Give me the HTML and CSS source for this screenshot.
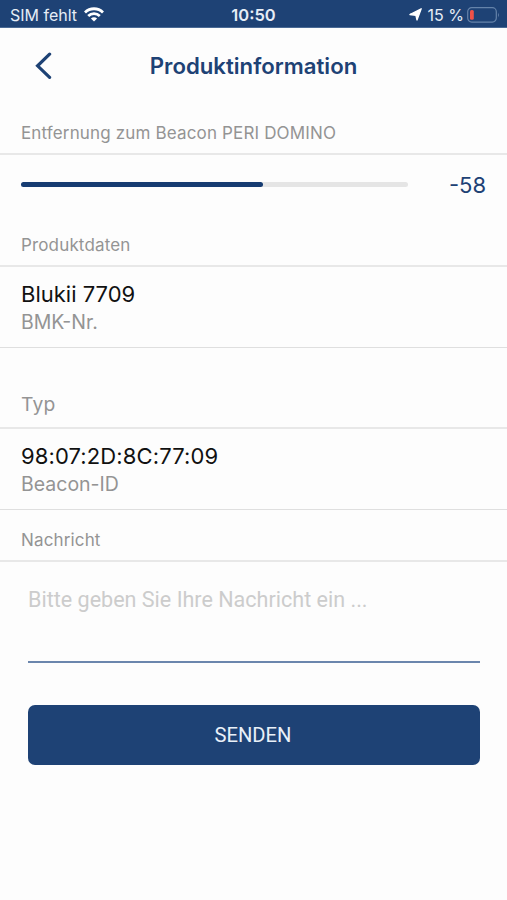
FILE: index.html
```html
<!DOCTYPE html>
<html lang="de">
<head>
<meta charset="utf-8">
<title>Produktinformation</title>
<link rel="stylesheet" href="styles.css">
</head>
<body>
<div class="status-bar">
  <div class="status-left"><span class="carrier">SIM fehlt</span>
    <svg class="wifi" width="20" height="15" viewBox="0 0 20 15" fill="none" stroke="#fff" stroke-width="2.8"><path d="M1 5.4C6 .5 14 .5 19 5.4M4.2 8.9c3.3-3.1 8.3-3.1 11.6 0"/><path d="M6.9 11.5c1.8-1.6 4.4-1.6 6.2 0L10 14.6Z" fill="#fff" stroke="none"/></svg>
  </div>
  <span class="clock">10:50</span>
  <div class="status-right">
    <svg class="location" width="13" height="13" viewBox="0 0 13 13"><path d="M12.2.8 8 12 6.9 7.3.9 6.5Z" fill="#fff" stroke="#fff" stroke-width="1.3" stroke-linejoin="round"/></svg>
    <span class="charge">15 %</span>
    <svg class="battery" width="33" height="16" viewBox="0 0 33 16"><rect x=".7" y=".7" width="28.6" height="14.4" rx="4" fill="none" stroke="#6583aa" stroke-width="1.2"/><rect x="3" y="3" width="3.8" height="9.8" rx="1.5" fill="#ee5148"/><path d="M31 5.4q1.8 2.4 0 5Z" fill="#6583aa"/></svg>
  </div>
</div>
<header class="nav">
  <svg class="back" width="18" height="28" viewBox="0 0 18 28" fill="none" stroke="#1e4275" stroke-width="3.2" stroke-linecap="round"><path d="M15.6 2.2 3.6 13.8 15.6 25.3"/></svg>
  <h1 class="title">Produktinformation</h1>
</header>
<main>
  <h2 class="label label-distance">Entfernung zum Beacon PERI DOMINO</h2>
  <div class="distance">
    <div class="track"><div class="fill"></div></div>
    <span class="value">-58</span>
  </div>
  <h2 class="label label-data">Produktdaten</h2>
  <div class="item"><div class="item-title">Blukii 7709</div><div class="item-note">BMK-Nr.</div></div>
  <h2 class="label label-type">Typ</h2>
  <div class="item"><div class="item-title item-id">98:07:2D:8C:77:09</div><div class="item-note">Beacon-ID</div></div>
  <h2 class="label label-message">Nachricht</h2>
  <div class="form">
    <div class="message">Bitte geben Sie Ihre Nachricht ein ...</div>
    <button class="send">SENDEN</button>
  </div>
</main>
</body>
</html>
```
FILE: styles.css
```css
* { box-sizing: border-box; }
body {
  margin: 0;
  height: 900px;
  overflow: hidden;
  background: #fdfdfd;
  color: #111;
  font-family: Inter, "Liberation Sans", sans-serif;
}
.status-bar {
  display: grid;
  grid-template-columns: 1fr auto 1fr;
  align-items: center;
  height: 28px;
  padding: 2px 7px 0 10px;
  background: #1e4275;
  border-bottom: 1px solid #4a6a95;
  color: #e6edf6;
  font-size: 16px;
  line-height: 20px;
}
.status-left, .status-right { display: flex; align-items: center; }
.status-left { gap: 7px; }
.status-right { justify-content: flex-end; }
.location { margin-right: 6px; }
.charge { margin-right: 3px; }
.clock { margin-right: 3px; font-size: 16.5px; font-weight: 600; }
.nav {
  display: grid;
  grid-template-columns: 36px 1fr 36px;
  align-items: center;
  height: 76px;
  padding: 0 34px;
}
.title {
  margin: 0;
  color: #1e4275;
  font-size: 22.2px;
  font-weight: 600;
  line-height: 28px;
  text-align: center;
}
.label {
  display: flex;
  align-items: center;
  margin: 0;
  padding: 0 21px;
  border-bottom: 2px solid #e8e8e8;
  color: #949494;
  font-size: 17px;
  font-weight: 400;
  letter-spacing: .15px;
  white-space: nowrap;
}
.label-distance { height: 51px; padding-top: 9px; }
.label-data { height: 53px; padding-top: 10px; }
.label-type { height: 81px; padding-top: 33px; font-size: 19.3px; }
.label-message { height: 52px; padding-top: 10px; }
.distance {
  display: flex;
  align-items: center;
  justify-content: space-between;
  height: 59px;
  padding: 0 21px;
}
.track { width: 387px; height: 5px; border-radius: 3px; background: #e5e5e5; }
.fill { width: 242px; height: 5px; border-radius: 3px; background: #163c72; }
.value { color: #1e4275; font-size: 22px; }
.item {
  height: 81px;
  padding: 13px 21px 0;
  border-bottom: 1px solid #dfdfdf;
  white-space: nowrap;
}
.item-title { font-size: 22px; line-height: 28px; }
.item-id { letter-spacing: .12px; }
.item-note { color: #949494; font-size: 19.5px; line-height: 29px; }
.form { padding: 0 27px 0 28px; font-family: Roboto, sans-serif; }
.message {
  height: 101px;
  padding-top: 25px;
  border-bottom: 2px solid #6b86ad;
  color: #ccc;
  font-size: 21.55px;
  line-height: 26px;
}
.send {
  display: block;
  width: 100%;
  height: 60px;
  margin-top: 42px;
  padding: 0 2px 1px 0;
  border: 0;
  border-radius: 7px;
  background: #1e4275;
  color: #e9f0f8;
  font-family: Roboto, sans-serif;
  font-size: 20.2px;
}
```
